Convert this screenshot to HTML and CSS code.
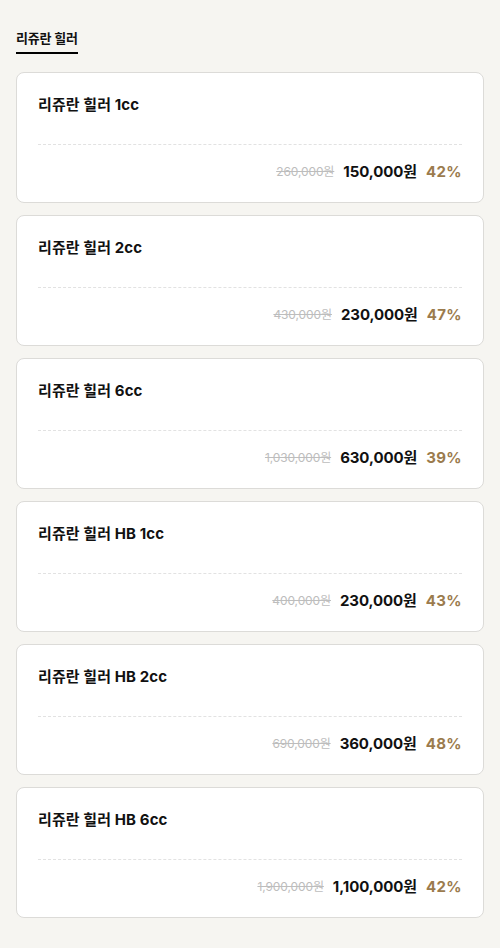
FILE: index.html
```html
<!DOCTYPE html>
<html lang="ko">
<head>
<meta charset="utf-8">
<link rel="stylesheet" href="styles.css">
</head>
<body>
<div class="page">
  <div class="tabs"><span class="tab">리쥬란 힐러</span></div>
  <div class="list">
    <div class="card"><div class="title">리쥬란 힐러 1cc</div><div class="divider"></div><div class="prices"><span class="orig">260,000원</span><span class="price">150,000원</span><span class="pct">42%</span></div></div>
    <div class="card"><div class="title">리쥬란 힐러 2cc</div><div class="divider"></div><div class="prices"><span class="orig">430,000원</span><span class="price">230,000원</span><span class="pct">47%</span></div></div>
    <div class="card"><div class="title">리쥬란 힐러 6cc</div><div class="divider"></div><div class="prices"><span class="orig">1,030,000원</span><span class="price">630,000원</span><span class="pct">39%</span></div></div>
    <div class="card"><div class="title">리쥬란 힐러 HB 1cc</div><div class="divider"></div><div class="prices"><span class="orig">400,000원</span><span class="price">230,000원</span><span class="pct">43%</span></div></div>
    <div class="card"><div class="title">리쥬란 힐러 HB 2cc</div><div class="divider"></div><div class="prices"><span class="orig">690,000원</span><span class="price">360,000원</span><span class="pct">48%</span></div></div>
    <div class="card"><div class="title">리쥬란 힐러 HB 6cc</div><div class="divider"></div><div class="prices"><span class="orig">1,900,000원</span><span class="price">1,100,000원</span><span class="pct">42%</span></div></div>
  </div>
</div>
</body>
</html>
```
FILE: styles.css
```css
html, body { margin: 0; padding: 0; }
body {
  background: #f6f5f1;
  font-family: Inter, "Noto Sans CJK KR", sans-serif;
  color: #111;
}
.page { padding: 29px 16px 0; }
.tabs { display: flex; margin-bottom: 18px; }
.tab {
  font-size: 13px;
  font-weight: 700;
  line-height: 18px;
  padding-bottom: 5px;
  border-bottom: 2px solid #000;
  letter-spacing: -0.2px;
}
.list { display: flex; flex-direction: column; gap: 12px; }
.card {
  background: #fff;
  border: 1px solid #dcdbd8;
  border-radius: 8px;
  padding: 21px 21px 19px;
}
.title {
  font-size: 15px;
  font-weight: 700;
  line-height: 22px;
  letter-spacing: 0.1px;
}
.divider {
  margin-top: 28px;
  border-top: 1px dashed #e2e2e2;
}
.prices {
  margin-top: 16px;
  display: flex;
  justify-content: flex-end;
  align-items: center;
  line-height: 22px;
}
.orig {
  font-size: 12px;
  color: #bdbdbd;
  text-decoration: line-through;
  margin-right: 9px;
  letter-spacing: -0.1px;
}
.price {
  font-size: 15px;
  font-weight: 700;
  margin-right: 9px;
  letter-spacing: -0.1px;
}
.pct {
  font-size: 15px;
  font-weight: 700;
  color: #9b7b4d;
  letter-spacing: 0.4px;
}
```
